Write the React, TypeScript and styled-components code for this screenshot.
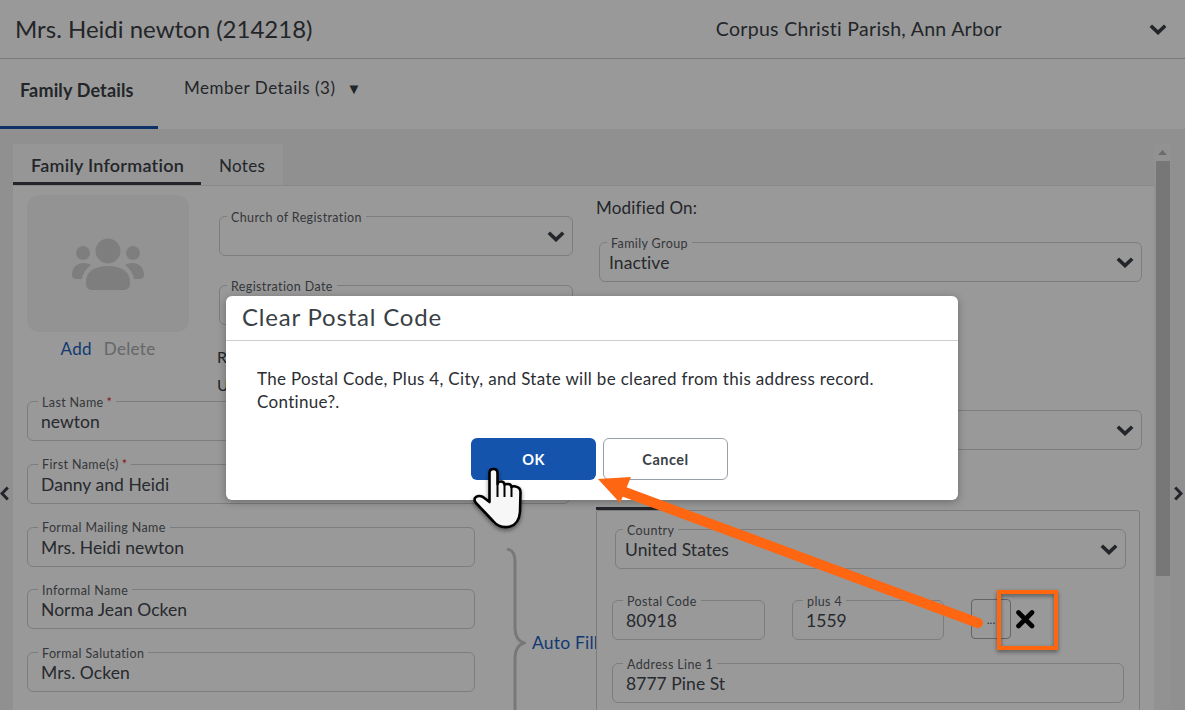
import React from "react";
import styled, { createGlobalStyle } from "styled-components";

const Global = createGlobalStyle`
  html, body { margin: 0; padding: 0; overflow: hidden; background: #fff; }
  * { box-sizing: border-box; }
  body { font-family: "Lato", "Liberation Sans", sans-serif; color: #3b3f46; }
`;

const Page = styled.div`
  position: relative;
  width: 1185px;
  height: 710px;
  overflow: hidden;
  display: flex;
  flex-direction: column;
  background: #fff;
`;

const Header = styled.header`
  flex: none;
  height: 59px;
  display: flex;
  align-items: center;
  padding: 0 18px 0 15px;
  border-bottom: 1px solid #cdcdcd;
`;

const Title = styled.h1`
  margin: 0 0 2px;
  font-size: 24px;
  font-weight: 400;
`;

const Parish = styled.div`
  margin: 0 147px 2px auto;
  font-size: 19.5px;
  letter-spacing: 0.3px;
`;

const NavTabs = styled.nav`
  flex: none;
  height: 70px;
  display: flex;
`;

const NavActive = styled.div`
  width: 158px;
  padding: 20px 0 0 20px;
  border-bottom: 3px solid #1554ad;
  font-size: 18px;
  font-weight: 700;
  line-height: 22px;
  letter-spacing: 0.15px;
`;

const NavItem = styled.div`
  margin-left: 26px;
  padding-top: 18px;
  font-size: 17px;
  line-height: 22px;
  letter-spacing: 0.52px;
  display: flex;
  gap: 11px;
`;

const Caret = styled.span`
  font-size: 15px;
`;

const Content = styled.div`
  flex: 1;
  min-height: 0;
  display: flex;
  background: #f0f0f0;
  padding-top: 15px;
`;

const SideNav = styled.div<{ $width: number; $align: string }>`
  flex: none;
  width: ${(p) => p.$width}px;
  padding-top: 342px;
  display: flex;
  justify-content: ${(p) => p.$align};
`;

const Main = styled.main`
  flex: none;
  width: 1141px;
  display: flex;
  flex-direction: column;
`;

const TabStrip = styled.div`
  flex: none;
  width: 270px;
  height: 41px;
  display: flex;
  background: #f8f8f8;
`;

const InnerTab = styled.div<{ $active?: boolean }>`
  width: ${(p) => (p.$active ? "188px" : "82px")};
  padding-left: 18px;
  padding-top: ${(p) => (p.$active ? 10 : 11)}px;
  font-size: ${(p) => (p.$active ? 18 : 17)}px;
  line-height: 22px;
  font-weight: ${(p) => (p.$active ? 600 : 400)};
  letter-spacing: ${(p) => (p.$active ? 0.25 : 0.3)}px;
  border-bottom: ${(p) => (p.$active ? "3px solid #3b3f46" : "none")};
  background: ${(p) => (p.$active ? "#fafafa" : "transparent")};
`;

const Card = styled.section`
  flex: 1;
  min-height: 0;
  overflow: hidden;
  background: #fff;
  border-top: 1px solid #e4e4e4;
  padding: 9px 0 0 14px;
  display: flex;
  gap: 23px;
`;

const Scrollbar = styled.div`
  flex: none;
  width: 17px;
  background: #f4f4f4;
  display: flex;
  flex-direction: column;
  align-items: center;
`;

const ScrollUp = styled.div`
  height: 17px;
  padding-top: 6px;
  svg { display: block; }
`;

const ScrollThumb = styled.div`
  width: 14px;
  height: 415px;
  background: #c6c6c6;
`;

const LeftCol = styled.div`
  flex: none;
  width: 546px;
`;

const TopRow = styled.div`
  height: 206px;
  display: flex;
  gap: 30px;
`;

const AvatarBlock = styled.div`
  flex: none;
  width: 162px;
`;

const Avatar = styled.div`
  height: 137px;
  border-radius: 12px;
  background: #f6f6f6;
  display: flex;
  align-items: center;
  justify-content: center;
`;

const AvatarLinks = styled.div`
  margin-top: 6px;
  display: flex;
  justify-content: center;
  gap: 12px;
  font-size: 17px;
  line-height: 22px;
  letter-spacing: 0.3px;
`;

const LinkText = styled.span<{ $muted?: boolean }>`
  color: ${(p) => (p.$muted ? "#a9acb0" : "#1b5fc0")};
`;

const RegStack = styled.div`
  flex: none;
  width: 354px;
  padding-top: 21px;
  display: flex;
  flex-direction: column;
  gap: 29px;
`;

const InfoLines = styled.div`
  margin: -11px 0 0 -2px;
  font-size: 16px;
  line-height: 28px;
`;

const Stack = styled.div`
  display: flex;
  flex-direction: column;
  gap: 22.75px;
`;

const Field = styled.div<{ $width: number; $shift?: number; $top?: number; $compact?: boolean }>`
  position: relative;
  flex: none;
  width: ${(p) => p.$width}px;
  height: 40px;
  margin-left: ${(p) => p.$shift ?? 0}px;
  margin-top: ${(p) => p.$top ?? 0}px;
  border: 1px solid #cfd1d4;
  border-radius: 6px;
  padding: 1px 7px 0 ${(p) => (p.$compact ? 9 : 13)}px;
  display: flex;
  align-items: center;
  justify-content: space-between;
  font-size: 17.5px;
  letter-spacing: 0.05px;
  color: #42464d;
`;

const FieldLabel = styled.span<{ $compact?: boolean }>`
  position: absolute;
  top: -6.5px;
  left: ${(p) => (p.$compact ? 7 : 10)}px;
  padding: 0 4px;
  background: #fff;
  font-size: 12.5px;
  line-height: 14px;
  letter-spacing: 0.38px;
  color: #585c63;
  white-space: nowrap;
`;

const Req = styled.span`
  color: #e2231a;
  margin-left: 3px;
`;

const Lower = styled.div`
  display: flex;
  margin-top: 22.75px;
`;

const BraceWrap = styled.div`
  flex: none;
  margin: 21px 0 0 31px;
  display: flex;
  align-items: center;
  height: 190px;
  gap: 6px;
`;

const BraceSvg = styled.svg`
  flex: none;
`;

const AutoFill = styled.span`
  font-size: 17.5px;
  letter-spacing: 0.2px;
  color: #1b5fc0;
  white-space: nowrap;
`;

const RightCol = styled.div`
  flex: none;
  width: 546px;
`;

const ModifiedOn = styled.div`
  font-size: 17px;
  line-height: 26px;
  letter-spacing: 0.2px;
  margin-bottom: 21px;
`;

const SubTab = styled.div`
  width: 68px;
  height: 3px;
  margin-top: 57px;
  background: #3b3f46;
`;

const AddressBox = styled.div`
  width: 544px;
  height: 300px;
  border: 1px solid #cfd1d4;
  border-radius: 3px;
  padding: 18px 0 0 15px;
`;

const PostalRow = styled.div`
  display: flex;
  align-items: flex-start;
  gap: 27px;
  margin: 31px 0 23px;
`;

const DotsButton = styled.div`
  flex: none;
  width: 40px;
  height: 40px;
  margin-top: -1px;
  border: 1px solid #a3a7ad;
  border-radius: 4px;
  display: flex;
  align-items: center;
  justify-content: center;
  font-size: 12px;
  color: #585c63;
`;

const Backdrop = styled.div`
  position: absolute;
  inset: 0;
  background: rgba(0, 0, 0, 0.4);
  display: flex;
  justify-content: center;
  padding: 296px 1px 0 0;
`;

const Modal = styled.div`
  width: 732px;
  height: 204px;
  background: #fff;
  border-radius: 6px;
  box-shadow: 0 2px 8px rgba(0, 0, 0, 0.3);
  color: #2b2e33;
`;

const ModalHeader = styled.div`
  height: 45px;
  padding: 0 0 4px 16px;
  display: flex;
  align-items: center;
  border-bottom: 1px solid #ccced2;
  font-size: 24px;
  letter-spacing: 0.8px;
  color: #3b3f46;
`;

const ModalBody = styled.div`
  padding: 26px 31px 0;
  font-size: 17px;
  line-height: 23px;
  letter-spacing: 0.32px;
`;

const Actions = styled.div`
  display: flex;
  gap: 7px;
  margin-top: 25px;
  padding-left: 245px;
`;

const Button = styled.div<{ $primary?: boolean }>`
  width: 125px;
  height: 42px;
  border-radius: 6px;
  display: flex;
  align-items: center;
  justify-content: center;
  font-size: 14.5px;
  font-weight: 700;
  letter-spacing: 0.5px;
  background: ${(p) => (p.$primary ? "#1554ad" : "#fff")};
  color: ${(p) => (p.$primary ? "#fff" : "#3b3f46")};
  border: ${(p) => (p.$primary ? "none" : "1px solid #9aa0a8")};
`;

const Annotation = styled.svg`
  position: absolute;
  inset: 0;
  pointer-events: none;
`;

const ChevronSvg = styled.svg`
  flex: none;
`;

const Chevron = () => (
  <ChevronSvg width="18" height="11" viewBox="0 0 18 11">
    <polyline points="1.800,1.800 9,8.600 16.200,1.800" fill="none" stroke="#3b3f46" strokeWidth="3.600" />
  </ChevronSvg>
);

const SideChevron = ({ dir }: { dir: "left" | "right" }) => (
  <svg width="9" height="15" viewBox="0 0 9 15">
    <polyline
      points={dir === "left" ? "7.800,1.500 2,7.500 7.800,13.500" : "1.200,1.500 7,7.500 1.200,13.500"}
      fill="none"
      stroke="#3b3f46"
      strokeWidth="3"
    />
  </svg>
);

const UsersIcon = () => (
  <svg width="72" height="52" viewBox="0 0 72 52" fill="#d3d3d3">
    <circle cx="36" cy="13" r="12.500" />
    <circle cx="11" cy="15" r="7" />
    <circle cx="61" cy="15" r="7" />
    <path d="M14 52 V44 C14 33 23 28 36 28 C49 28 58 33 58 44 V46 C58 49.500 55.500 52 52 52 H20 C16.500 52 14 49.500 14 46 Z" />
    <path d="M0 37 C0 29 5 25 12 25 C15 25 17.500 26 19 27 C14 31 10.500 36 10 41 H4 C1.500 41 0 39.500 0 37 Z" />
    <path d="M72 37 C72 29 67 25 60 25 C57 25 54.500 26 53 27 C58 31 61.500 36 62 41 H68 C70.500 41 72 39.500 72 37 Z" />
  </svg>
);

const Brace = () => (
  <BraceSvg width="20" height="190" viewBox="0 0 20 190">
    <path
      d="M1 1 C7 2 9 6 9 14 L9 80 C9 88 12 93 18 95 C12 97 9 102 9 110 L9 176 C9 184 7 188 1 189"
      fill="none"
      stroke="#c9c9c9"
      strokeWidth="3"
    />
  </BraceSvg>
);

type FormFieldProps = {
  label?: string;
  value?: string;
  width: number;
  shift?: number;
  top?: number;
  compact?: boolean;
  required?: boolean;
  select?: boolean;
};

const FormField = ({ label, value, width, shift, top, compact, required, select }: FormFieldProps) => (
  <Field $width={width} $shift={shift} $top={top} $compact={compact}>
    {label && (
      <FieldLabel $compact={compact}>
        {label}
        {required && <Req>*</Req>}
      </FieldLabel>
    )}
    <span>{value}</span>
    {select && <Chevron />}
  </Field>
);

export default function App() {
  return (
    <Page>
      <Global />
      <Header>
        <Title>Mrs. Heidi newton (214218)</Title>
        <Parish>Corpus Christi Parish, Ann Arbor</Parish>
        <Chevron />
      </Header>
      <NavTabs>
        <NavActive>Family Details</NavActive>
        <NavItem>
          Member Details (3) <Caret>▼</Caret>
        </NavItem>
      </NavTabs>
      <Content>
        <SideNav $width={13} $align="flex-start">
          <SideChevron dir="left" />
        </SideNav>
        <Main>
          <TabStrip>
            <InnerTab $active>Family Information</InnerTab>
            <InnerTab>Notes</InnerTab>
          </TabStrip>
          <Card>
            <LeftCol>
              <TopRow>
                <AvatarBlock>
                  <Avatar>
                    <UsersIcon />
                  </Avatar>
                  <AvatarLinks>
                    <LinkText>Add</LinkText>
                    <LinkText $muted>Delete</LinkText>
                  </AvatarLinks>
                </AvatarBlock>
                <RegStack>
                  <FormField label="Church of Registration" width={354} compact select />
                  <FormField label="Registration Date" width={354} compact select />
                  <InfoLines>
                    R
                    <br />U
                  </InfoLines>
                </RegStack>
              </TopRow>
              <Stack>
                <FormField label="Last Name" value="newton" width={543} required />
                <FormField label="First Name(s)" value="Danny and Heidi" width={543} required />
              </Stack>
              <Lower>
                <Stack>
                  <FormField label="Formal Mailing Name" value="Mrs. Heidi newton" width={448} />
                  <FormField label="Informal Name" value="Norma Jean Ocken" width={448} />
                  <FormField label="Formal Salutation" value="Mrs. Ocken" width={448} />
                </Stack>
                <BraceWrap>
                  <Brace />
                  <AutoFill>Auto Fill</AutoFill>
                </BraceWrap>
              </Lower>
            </LeftCol>
            <RightCol>
              <ModifiedOn>Modified On:</ModifiedOn>
              <FormField label="Family Group" value="Inactive" width={543} shift={3} compact select />
              <FormField width={543} shift={3} top={128} compact select />
              <SubTab />
              <AddressBox>
                <FormField label="Country" value="United States" width={511} shift={3} compact select />
                <PostalRow>
                  <FormField label="Postal Code" value="80918" width={153} />
                  <FormField label="plus 4" value="1559" width={152} />
                  <DotsButton>...</DotsButton>
                </PostalRow>
                <FormField label="Address Line 1" value="8777 Pine St" width={512} />
              </AddressBox>
            </RightCol>
          </Card>
        </Main>
        <Scrollbar>
          <ScrollUp>
            <svg width="9" height="5" viewBox="0 0 9 5">
              <path d="M0 5 L4.500 0 L9 5 Z" fill="#b5b5b5" />
            </svg>
          </ScrollUp>
          <ScrollThumb />
        </Scrollbar>
        <SideNav $width={14} $align="center">
          <SideChevron dir="right" />
        </SideNav>
      </Content>
      <Backdrop>
        <Modal>
          <ModalHeader>Clear Postal Code</ModalHeader>
          <ModalBody>
            The Postal Code, Plus 4, City, and State will be cleared from this address record.
            <br />
            Continue?.
          </ModalBody>
          <Actions>
            <Button $primary>OK</Button>
            <Button>Cancel</Button>
          </Actions>
        </Modal>
      </Backdrop>
      <Annotation width="1185" height="710" viewBox="0 0 1185 710">
        <defs>
          <filter id="soft" x="-20%" y="-20%" width="140%" height="140%">
            <feDropShadow dx="0" dy="2" stdDeviation="2" floodColor="#000" floodOpacity="0.45" />
          </filter>
        </defs>
        <rect x="999" y="592" width="57" height="56" fill="none" stroke="#ff6611" strokeWidth="4" filter="url(#soft)" />
        <path d="M1018.500 612.500 L1032 626 M1032 612.500 L1018.500 626" stroke="#000" strokeWidth="4.600" strokeLinecap="round" />
        <line x1="978" y1="623" x2="622" y2="491" stroke="#ff6611" strokeWidth="10" strokeLinecap="round" />
        <polygon points="598,479 631,477 620,503" fill="#ff6611" />
        <g filter="url(#soft)">
          <path
            d="M489.500 473 Q489.500 469 493.500 469 Q497.500 469 497.500 473 L497.500 484 Q498 481.500 501 481.500 Q504 481.500 504.500 484.500 Q505 484 508 484 Q511 484 511.500 487 Q512.500 486 515.500 486.500 Q520.500 487.500 520.500 492 L520 512 Q519 524 510 526.500 Q500 529 493 521 L476 503 Q473 499 476 497 Q479 495 483 497 L489.500 502 Z"
            fill="#f7f7f7"
            stroke="#000"
            strokeWidth="2.600"
            strokeLinejoin="round"
          />
          <path d="M497.500 484 L497.500 497 M504.500 485 L504.500 497 M511.500 487 L511.500 497" stroke="#000" strokeWidth="2" fill="none" />
        </g>
      </Annotation>
    </Page>
  );
}
